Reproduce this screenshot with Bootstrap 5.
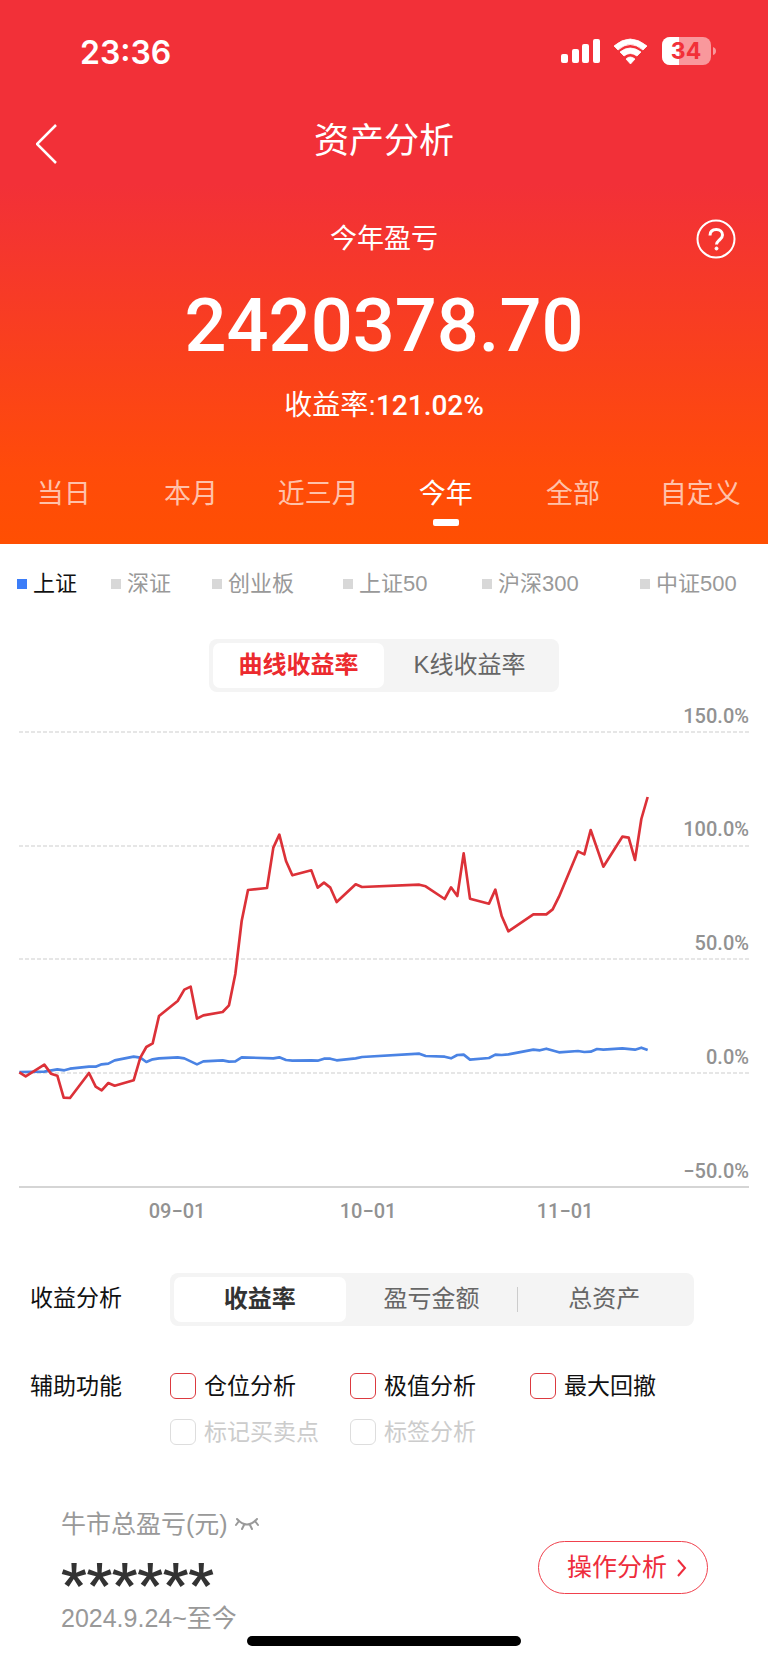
<!DOCTYPE html>
<html lang="zh-CN">
<head>
<meta charset="utf-8">
<meta name="viewport" content="width=device-width, initial-scale=1">
<title>资产分析</title>
<link href="https://cdn.jsdelivr.net/npm/bootstrap@5.3.0/dist/css/bootstrap.min.css" rel="stylesheet">
<style>
  body { font-family: "Liberation Sans", "Noto Sans CJK SC", sans-serif; color: #111; background: #fff; }
  button { font-family: inherit; }
  .hero { background: linear-gradient(#f23038 0, #f23038 184px, #ff4b0a 470px, #ff4f02 100%); color: #fff; }
  .status-bar { height: 102px; padding: 0 52px 0 80px; }
  .clock { font: 600 32px/40px Inter, sans-serif; }
  .battery-text { font: 700 23px Inter, sans-serif; fill: #f23038; }
  .title-bar { height: 84px; padding: 0 36px; }
  .title-bar h1 { font-size: 35px; line-height: 48px; font-weight: 400; margin-top: 15px; }
  .back { margin-top: 22px; }
  .side { width: 40px; }
  .summary { padding: 33px 32px 0; }
  .fs-27 { font-size: 27px; line-height: 40px; }
  .total { font: 500 74px/88px Roboto, sans-serif; margin-top: 23px; }
  .rate { font-size: 28px; line-height: 40px; margin-top: 16px; }
  .rate strong { font-family: Roboto, sans-serif; font-weight: 500; }
  .periods { padding-right: 4px; margin-top: 48px; height: 70px; }
  .periods button { color: rgba(255,255,255,.68); line-height: 40px; font-size: 27px; }
  .periods .active { color: #fff; }
  .periods .active::after { content: ""; display: block; width: 26px; height: 7px; border-radius: 2px; background: #fff; margin: 5px auto 0; }
  .legend-row { display: grid; grid-template-columns: 94fr 101fr 131fr 139fr 158fr 128fr; padding-left: 17px; margin-top: 24px; }
  .legend-row button { font-size: 22px; line-height: 32px; color: #999; gap: 6px; }
  .legend-row button::before { content: ""; width: 10px; height: 10px; background: #d8d8d8; }
  .legend-row .active { color: #111; }
  .legend-row .active::before { background: #3c7df8; }
  .seg { background: #f4f4f4; border-radius: 8px; padding: 4px; height: 53px; }
  .seg button { font-size: 24px; line-height: 36px; color: #666; border-radius: 7px; padding-bottom: 2px; }
  .seg .active { background: #fff; color: #333; font-weight: 700; }
  .seg-chart { width: 350px; margin: 39px auto 0; }
  .seg-chart .active { color: #ec2a2e; }
  .divider { width: 1px; height: 25px; background: #ccc; }
  .chart { margin-top: 8px; }
  .chart text { font: 500 20px Roboto, sans-serif; fill: #929292; }
  .settings { padding: 0 74px 0 30px; font-size: 23px; line-height: 34px; }
  .settings .caption { width: 140px; }
  .helpers { margin-top: 43px; }
  .options { display: grid; grid-template-columns: 180px 180px 1fr; row-gap: 12px; }
  .options .form-check-input { width: 26px; height: 26px; margin: 0; border: 1px solid #dc3a40; border-radius: 6px; }
  .options label { gap: 8px; line-height: 34px; }
  .options .form-check-input:disabled { border-color: #ddd; opacity: 1; }
  .options .off { color: #ccc; }
  .bull { padding: 0 60px 0 61px; margin-top: 57px; }
  .muted { font-size: 25px; line-height: 36px; color: #999; gap: 6px; }
  .stars { font: 700 56px/84px Roboto, sans-serif; color: #333; height: 58px; }
  .analyse { width: 170px; height: 53px; border: 1px solid #f0414d; border-radius: 27px; color: #ee2c3c; font-size: 25px; gap: 10px; margin-top: 35px; }
  .home-bar { width: 274px; height: 10px; border-radius: 5px; background: #000; margin: 0 auto 16px; }
</style>
</head>
<body>
<header class="hero">
  <div class="status-bar d-flex align-items-center justify-content-between">
    <span class="clock pt-1">23:36</span>
    <svg width="155" height="28" viewBox="0 0 155 28" fill="#fff" aria-hidden="true">
      <rect x="0" y="17" width="7" height="9" rx="2"/><rect x="11" y="12" width="7" height="14" rx="2"/><rect x="21" y="7" width="7" height="19" rx="2"/><rect x="32" y="2" width="7" height="24" rx="2"/>
      <path d="M53 9Q69-5 86 9L82 13Q69 2 57 13ZM59 15Q69 7 80 15L76 19Q69 14 63 19ZM65 22Q69 18 74 22L69.500 27Z" stroke="#fff" stroke-width=".8" stroke-linejoin="round"/>
      <rect x="101" y="0" width="49" height="28" rx="8" opacity=".5"/>
      <path d="M109 0h9v28h-9a8 8 0 0 1-8-8V8a8 8 0 0 1 8-8z"/>
      <path d="M152 10q3 1 3 4t-3 4z" opacity=".5"/>
      <text class="battery-text" x="125" y="22" text-anchor="middle">34</text>
    </svg>
  </div>
  <div class="title-bar d-flex justify-content-between">
    <button class="btn p-0 side back text-start border-0 align-self-start" aria-label="返回">
      <svg class="d-block" width="21" height="40" viewBox="0 0 21 40" fill="none" stroke="#fff" stroke-width="2.500"><path d="M20 1 1 20l19 19"/></svg>
    </button>
    <h1 class="mb-0">资产分析</h1>
    <span class="side"></span>
  </div>
  <div class="summary text-center">
    <div class="d-flex justify-content-between align-items-center">
      <span class="side"></span>
      <span class="fs-27">今年盈亏</span>
      <button class="btn p-0 border-0 side" aria-label="帮助">
        <svg class="d-block" width="40" height="40" viewBox="0 0 40 40" fill="none" stroke="#fff"><circle cx="20" cy="20" r="18.500" stroke-width="2"/><path d="M14 16.500c0-4 2.500-6 6.300-6s6.200 2.300 6.200 5.500c0 3-2 4-3.700 5.500s-2.300 2-2.300 4" stroke-width="3"/><circle cx="20.500" cy="29.500" r="1.500" fill="#fff"/></svg>
      </button>
    </div>
    <div class="total">2420378.70</div>
    <div class="rate">收益率:<strong>121.02%</strong></div>
  </div>
  <nav class="periods d-flex">
    <button class="btn flex-fill w-100 p-0 border-0 align-self-start">当日</button>
    <button class="btn flex-fill w-100 p-0 border-0 align-self-start">本月</button>
    <button class="btn flex-fill w-100 p-0 border-0 align-self-start">近三月</button>
    <button class="btn flex-fill w-100 p-0 border-0 align-self-start active">今年</button>
    <button class="btn flex-fill w-100 p-0 border-0 align-self-start">全部</button>
    <button class="btn flex-fill w-100 p-0 border-0 align-self-start">自定义</button>
  </nav>
</header>
<main>
  <div class="legend-row">
    <button class="btn p-0 border-0 d-flex align-items-center active">上证</button>
    <button class="btn p-0 border-0 d-flex align-items-center">深证</button>
    <button class="btn p-0 border-0 d-flex align-items-center">创业板</button>
    <button class="btn p-0 border-0 d-flex align-items-center">上证50</button>
    <button class="btn p-0 border-0 d-flex align-items-center">沪深300</button>
    <button class="btn p-0 border-0 d-flex align-items-center">中证500</button>
  </div>
  <div class="seg seg-chart d-flex">
    <button class="btn w-50 pt-0 px-0 border-0 active">曲线收益率</button>
    <button class="btn w-50 pt-0 px-0 border-0">K线收益率</button>
  </div>
  <svg class="chart d-block w-100" viewBox="0 0 768 525" role="img" aria-label="收益率曲线">
    <g stroke="#e6e6e6" stroke-width="2" stroke-dasharray="4 2">
      <path d="M19 32H749M19 146H749M19 259H749M19 373H749"/>
    </g>
    <path d="M19 487H749" stroke="#d5d5d5" stroke-width="2"/>
    <g text-anchor="end">
      <text x="749" y="23">150.0%</text><text x="749" y="136">100.0%</text><text x="749" y="250">50.0%</text><text x="749" y="364">0.0%</text><text x="749" y="478">−50.0%</text>
    </g>
    <g text-anchor="middle">
      <text x="177" y="518">09−01</text><text x="368" y="518">10−01</text><text x="565" y="518">11−01</text>
    </g>
    <svg width="768" height="500" viewBox="0 0 2304 1500" fill="none" stroke-width="8" stroke-linejoin="round">
      <polyline stroke="#4a83e4" points="58,1116 133,1115 172,1108 193,1111 210,1106 267,1100 287,1100 305,1093 325,1091 344,1081 401,1070 421,1073 439,1086 458,1078 477,1075 533,1072 553,1075 591,1093 610,1084 668,1081 687,1085 706,1084 725,1072 820,1075 838,1072 858,1080 877,1082 934,1081 953,1082 972,1076 991,1076 1010,1081 1067,1075 1086,1071 1258,1061 1277,1068 1334,1070 1353,1075 1372,1065 1391,1064 1410,1079 1467,1074 1486,1064 1505,1065 1525,1063 1600,1049 1620,1051 1639,1046 1677,1057 1734,1053 1753,1056 1772,1055 1791,1047 1810,1049 1867,1045 1905,1049 1924,1043 1943,1050"/>
      <polyline stroke="#dc3138" points="58,1117 77,1129 133,1094 153,1121 172,1127 191,1193 210,1194 267,1119 287,1160 305,1171 325,1149 344,1157 401,1141 421,1073 439,1041 458,1030 477,948 533,903 553,869 572,860 591,956 610,946 668,936 687,916 706,822 725,663 744,570 801,564 820,443 838,404 858,483 877,526 934,511 953,563 972,548 991,563 1010,606 1067,553 1086,561 1258,554 1277,559 1334,597 1353,562 1372,588 1391,460 1410,596 1467,611 1486,569 1505,648 1525,694 1600,643 1639,643 1658,628 1677,590 1734,454 1753,463 1772,390 1810,500 1867,410 1886,413 1905,480 1924,357 1943,291"/>
    </svg>
  </svg>
  <section class="settings">
    <div class="d-flex pt-5">
      <span class="caption mt-2">收益分析</span>
      <div class="seg d-flex align-items-stretch flex-grow-1">
        <button class="btn w-100 pt-0 px-0 border-0 active">收益率</button>
        <button class="btn w-100 pt-0 px-0 border-0">盈亏金额</button>
        <span class="divider align-self-center flex-shrink-0"></span>
        <button class="btn w-100 pt-0 px-0 border-0">总资产</button>
      </div>
    </div>
    <div class="d-flex helpers">
      <span class="caption">辅助功能</span>
      <div class="options flex-grow-1">
        <label class="d-flex align-items-center"><input class="form-check-input" type="checkbox">仓位分析</label>
        <label class="d-flex align-items-center"><input class="form-check-input" type="checkbox">极值分析</label>
        <label class="d-flex align-items-center"><input class="form-check-input" type="checkbox">最大回撤</label>
        <label class="d-flex align-items-center off"><input class="form-check-input" type="checkbox" disabled>标记买卖点</label>
        <label class="d-flex align-items-center off"><input class="form-check-input" type="checkbox" disabled>标签分析</label>
      </div>
    </div>
  </section>
  <section class="bull d-flex justify-content-between">
    <div>
      <div class="muted d-flex align-items-center">牛市总盈亏(元)
        <svg width="26" height="14" viewBox="0 0 26 14" fill="none" stroke="#999" stroke-width="2" stroke-linecap="round"><path d="M3 2q10 11 20 0M5 4 2 8M10 8l-2 4M16 8l2 4M21 4l3 4"/></svg>
      </div>
      <div class="stars">******</div>
      <div class="muted">2024.9.24~至今</div>
    </div>
    <button class="btn analyse py-0 ps-3 pe-2 d-flex align-items-center justify-content-center">操作分析
      <svg width="10" height="18" viewBox="0 0 10 18" fill="none" stroke="currentColor" stroke-width="2"><path d="m1 1 7 8-7 8"/></svg>
    </button>
  </section>
  <div class="home-bar"></div>
</main>
<script src="https://cdn.jsdelivr.net/npm/bootstrap@5.3.0/dist/js/bootstrap.bundle.min.js"></script>
</body>
</html>
